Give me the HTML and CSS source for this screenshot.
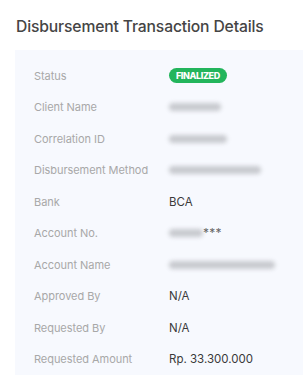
FILE: index.html
```html
<!DOCTYPE html>
<html>
<head>
<meta charset="utf-8">
<link rel="stylesheet" href="styles.css">
</head>
<body>
<h1 class="title">Disbursement Transaction Details</h1>
<div class="card">
  <div class="row"><span class="label">Status</span><span class="value"><span class="badge">FINALIZED</span></span></div>
  <div class="row"><span class="label">Client Name</span><span class="value"><span class="blur" style="width:52px"></span></span></div>
  <div class="row"><span class="label">Correlation ID</span><span class="value"><span class="blur" style="width:58px"></span></span></div>
  <div class="row"><span class="label">Disbursement Method</span><span class="value"><span class="blur" style="width:92px"></span></span></div>
  <div class="row"><span class="label">Bank</span><span class="value">BCA</span></div>
  <div class="row"><span class="label">Account No.</span><span class="value"><span class="blur" style="width:34px"></span><span class="stars">***</span></span></div>
  <div class="row"><span class="label">Account Name</span><span class="value"><span class="blur" style="width:106px"></span></span></div>
  <div class="row"><span class="label">Approved By</span><span class="value">N/A</span></div>
  <div class="row"><span class="label">Requested By</span><span class="value">N/A</span></div>
  <div class="row"><span class="label">Requested Amount</span><span class="value">Rp. 33.300.000</span></div>
</div>
</body>
</html>
```
FILE: styles.css
```css
html, body {
  margin: 0;
  padding: 0;
  background: #ffffff;
  font-family: Inter, "Open Sans", sans-serif;
}
.title {
  margin: 0;
  padding: 16px 0 0 16px;
  height: 33px;
  box-sizing: border-box;
  font-size: 15.7px;
  font-weight: 500;
  color: #454545;
  letter-spacing: -0.15px;
  line-height: 21px;
}
.card {
  margin-left: 15px;
  background: #f7f9fe;
  padding: 10px 0 0 19px;
  min-height: 330px;
  box-sizing: border-box;
  margin-top: 17px;
}
.row {
  display: flex;
  align-items: center;
  height: 31.5px;
}
.label {
  width: 135px;
  flex: none;
  font-size: 11px;
  color: #a8a8a8;
  letter-spacing: -0.05px;
}
.value {
  display: flex;
  align-items: center;
  font-size: 11.5px;
  color: #3a3a3a;
}
.badge {
  display: inline-block;
  background: #23b55c;
  color: #ffffff;
  font-size: 9px;
  font-weight: 800;
  letter-spacing: -0.4px;
  padding: 0 7px;
  height: 15px;
  line-height: 15px;
  border-radius: 8px;
}
.blur {
  display: inline-block;
  height: 8px;
  border-radius: 4px;
  background: #c8cacf;
  filter: blur(2px);
}
.stars {
  font-size: 12px;
  color: #666;
  letter-spacing: 0.3px;
  position: relative;
  top: -1px;
}
```
